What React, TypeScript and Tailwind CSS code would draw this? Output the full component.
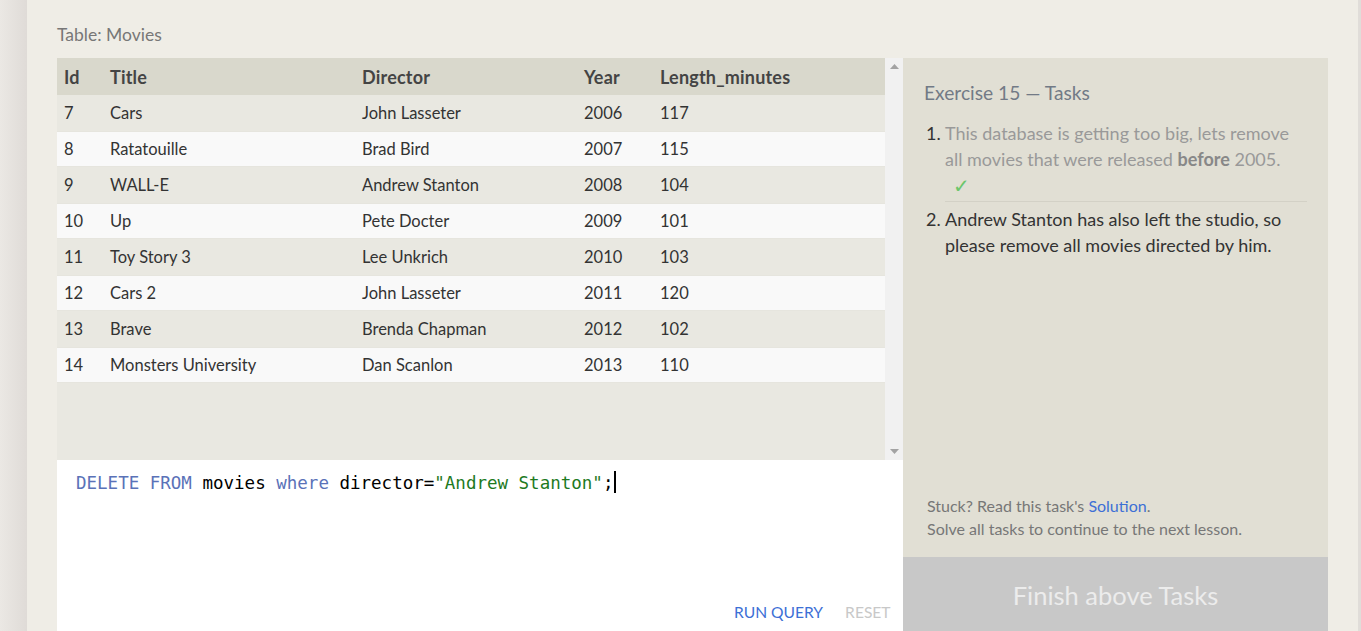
import React from "react";

const rows = [
  [7, "Cars", "John Lasseter", 2006, 117],
  [8, "Ratatouille", "Brad Bird", 2007, 115],
  [9, "WALL-E", "Andrew Stanton", 2008, 104],
  [10, "Up", "Pete Docter", 2009, 101],
  [11, "Toy Story 3", "Lee Unkrich", 2010, 103],
  [12, "Cars 2", "John Lasseter", 2011, 120],
  [13, "Brave", "Brenda Chapman", 2012, 102],
  [14, "Monsters University", "Dan Scanlon", 2013, 110],
];

export default function App() {
  return (
    <div
      className="flex h-[631px] w-full overflow-hidden bg-[#efede6] text-[#333]"
      style={{ fontFamily: "Lato, 'Open Sans', sans-serif" }}
    >
      <div className="w-[27px] shrink-0 bg-gradient-to-r from-[#ebe8e4] to-[#dfdbd7]" />
      <div className="flex-1 px-[30px] pt-[23px]">
        <div className="h-[35px] text-[17.5px] leading-[24px] text-[#777]">Table: Movies</div>
        <div className="flex">
          <div className="flex w-[846px] shrink-0 flex-col">
            <div className="flex h-[402px] bg-[#e9e8e1]">
              <div className="flex-1">
                <div className="grid h-[37px] grid-cols-[46px_252px_222px_76px_1fr] items-center bg-[#d9d8cc] pt-[2px] text-[18px] font-bold tracking-[0.2px] text-[#444]">
                  <div className="pl-[7px]">Id</div>
                  <div className="pl-[7px]">Title</div>
                  <div className="pl-[7px]">Director</div>
                  <div className="pl-[7px]">Year</div>
                  <div className="pl-[7px]">Length_minutes</div>
                </div>
                {rows.map((r, i) => (
                  <div
                    key={i}
                    className={
                      "grid h-[36px] grid-cols-[46px_252px_222px_76px_1fr] items-center pt-[1px] text-[16.5px] " +
                      (i % 2 === 0 ? "bg-[#e9e8e1]" : "bg-[#f9f9f9] border-y border-[#e6e5de]")
                    }
                  >
                    {r.map((c, j) => (
                      <div key={j} className="pl-[7px]">
                        {c}
                      </div>
                    ))}
                  </div>
                ))}
              </div>
              <div className="flex w-[18px] flex-col items-center justify-between bg-[#f1f1f1] py-[6px]">
                <svg width="9" height="5" viewBox="0 0 9 5">
                  <polygon points="0,5 4.5,0 9,5" fill="#a3a3a3" />
                </svg>
                <svg width="9" height="5" viewBox="0 0 9 5">
                  <polygon points="0,0 9,0 4.5,5" fill="#a3a3a3" />
                </svg>
              </div>
            </div>
            <div className="relative h-[200px] bg-white">
              <div
                className="pl-[19px] pt-[7px] text-[17.5px] leading-[24px]"
                style={{ fontFamily: "'DejaVu Sans Mono', 'Liberation Mono', monospace" }}
              >
                <span className="text-[#5a72b8]">DELETE</span> <span className="text-[#5a72b8]">FROM</span>{" "}
                <span className="text-black">movies</span> <span className="text-[#5a72b8]">where</span>{" "}
                <span className="text-black">director=</span>
                <span className="text-[#1e7a1e]">"Andrew Stanton"</span>
                <span className="text-black">;</span>
                <span className="ml-[1px] inline-block h-[22px] w-[2px] translate-y-[4px] bg-black" />
              </div>
              <div className="absolute left-[677px] top-[141px] flex gap-[22px] text-[15.6px]">
                <span className="text-[#3d6fd6]">RUN QUERY</span>
                <span className="text-[#c8c8c8]">RESET</span>
              </div>
            </div>
          </div>
          <div className="flex w-[425px] shrink-0 flex-col">
            <div className="flex h-[499px] flex-col bg-[#e1dfd4] px-[21px] pt-[22px]">
              <div className="text-[19.2px] leading-[26px] text-[#727a86]">Exercise 15 — Tasks</div>
              <ol className="mt-[14px] text-[18px] leading-[26px]">
                <li className="flex">
                  <span className="w-[21px] shrink-0 pl-[2px] text-[#333]">1.</span>
                  <div className="flex-1 pb-[3px] text-[#999] border-b border-[#d3d1c6]">
                    This database is getting too big, lets remove all movies that were released{" "}
                    <b className="text-[#888]">before</b> 2005.
                    <div className="pl-[8px] text-[20px] font-light text-[#6cc66c]">✓</div>
                  </div>
                </li>
                <li className="mt-[4px] flex">
                  <span className="w-[21px] shrink-0 pl-[2px] text-[#333]">2.</span>
                  <div className="flex-1 text-[#333]">
                    Andrew Stanton has also left the studio, so please remove all movies directed by him.
                  </div>
                </li>
              </ol>
              <div className="mt-auto pb-[17px] pl-[3px] text-[16px] leading-[23px] text-[#777]">
                <div>
                  Stuck? Read this task's <span className="text-[#3d6fd6]">Solution</span>.
                </div>
                <div>Solve all tasks to continue to the next lesson.</div>
              </div>
            </div>
            <div className="flex h-[80px] items-center justify-center bg-[#c8c8c8] pb-[4px] text-[25.5px] text-[#ececec]">
              Finish above Tasks
            </div>
          </div>
        </div>
      </div>
      <div className="w-[3px] shrink-0 bg-[#e0ddd9]" />
    </div>
  );
}
